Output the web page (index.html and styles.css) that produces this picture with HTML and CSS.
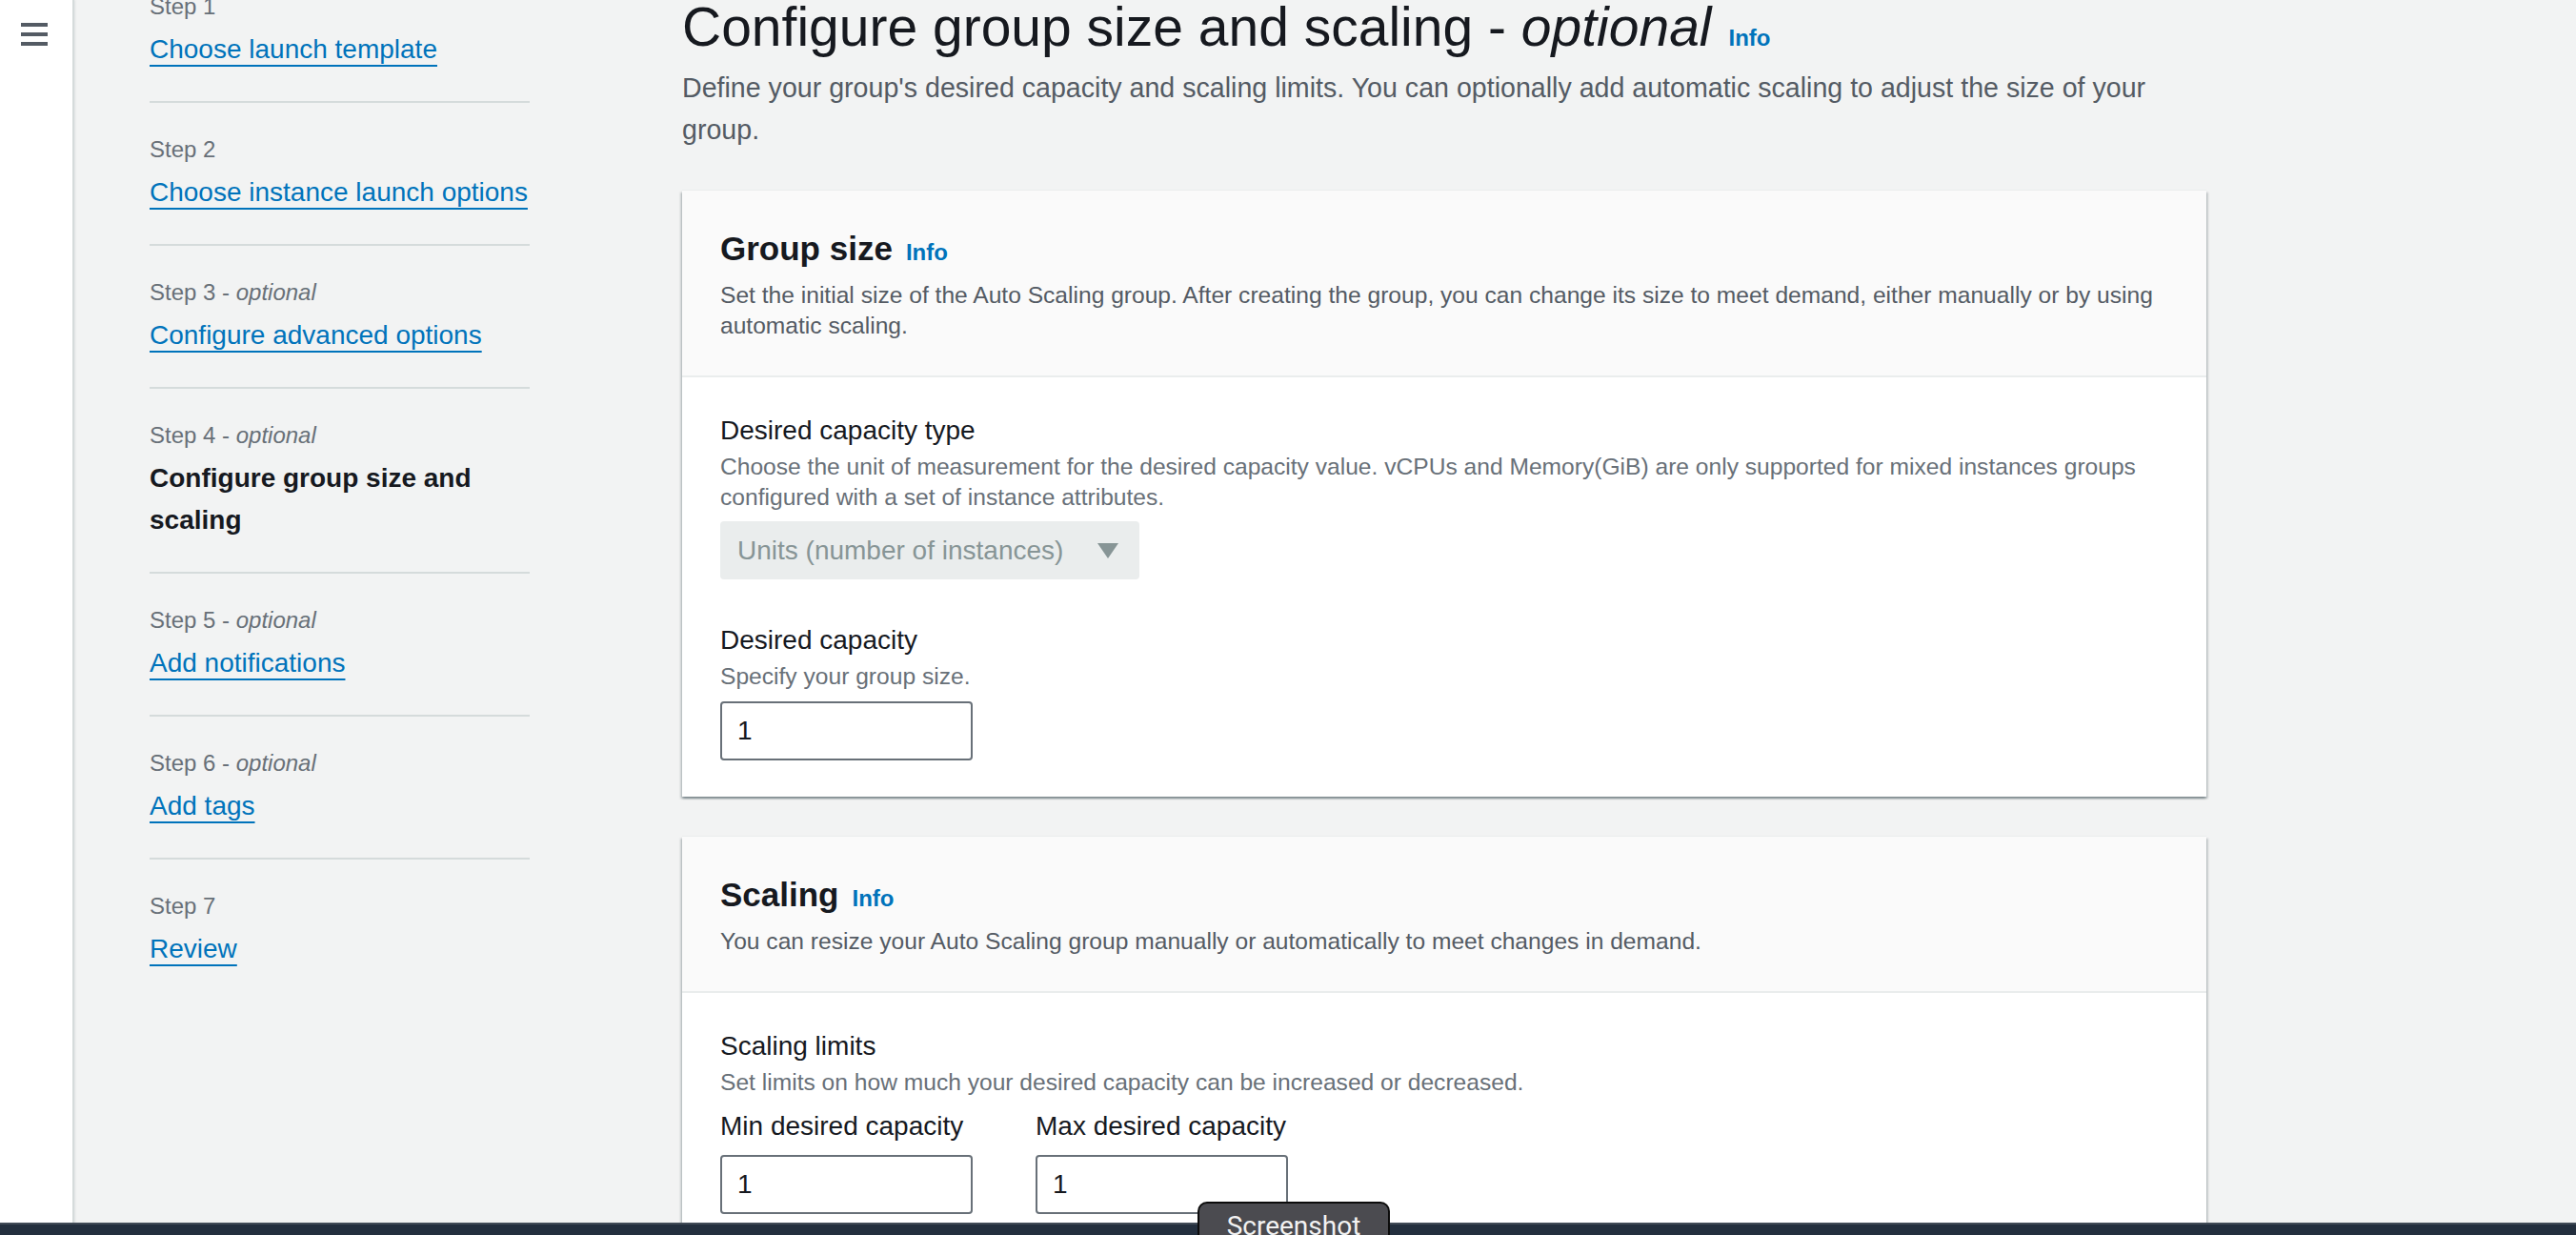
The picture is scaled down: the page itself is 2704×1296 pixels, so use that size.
FILE: index.html
```html
<!DOCTYPE html>
<html lang="en">
<head>
<meta charset="utf-8">
<title>Configure group size and scaling</title>
<link rel="stylesheet" href="styles.css">
</head>
<body>
<div class="app">
  <aside class="sidenav">
    <button class="menu" aria-label="Open navigation"><span></span><span></span><span></span></button>
  </aside>
  <div class="scroll">
    <nav class="steps">
      <ol>
        <li><div class="step-no">Step 1</div><a class="step-link" href="#">Choose launch template</a></li>
        <li><div class="step-no">Step 2</div><a class="step-link" href="#">Choose instance launch options</a></li>
        <li><div class="step-no">Step 3 - <i>optional</i></div><a class="step-link" href="#">Configure advanced options</a></li>
        <li><div class="step-no">Step 4 - <i>optional</i></div><span class="step-current">Configure group size and scaling</span></li>
        <li><div class="step-no">Step 5 - <i>optional</i></div><a class="step-link" href="#">Add notifications</a></li>
        <li><div class="step-no">Step 6 - <i>optional</i></div><a class="step-link" href="#">Add tags</a></li>
        <li><div class="step-no">Step 7</div><a class="step-link" href="#">Review</a></li>
      </ol>
    </nav>
    <main class="content">
      <h1 class="title">Configure group size and scaling - <i>optional</i><a class="info" href="#">Info</a></h1>
      <p class="lead">Define your group's desired capacity and scaling limits. You can optionally add automatic scaling to adjust the size of your group.</p>

      <section class="card">
        <header class="card-header">
          <h2>Group size<a class="info" href="#">Info</a></h2>
          <p>Set the initial size of the Auto Scaling group. After creating the group, you can change its size to meet demand, either manually or by using automatic scaling.</p>
        </header>
        <div class="card-body">
          <div class="field">
            <div class="label">Desired capacity type</div>
            <div class="hint">Choose the unit of measurement for the desired capacity value. vCPUs and Memory(GiB) are only supported for mixed instances groups configured with a set of instance attributes.</div>
            <div class="select"><span>Units (number of instances)</span><span class="caret"></span></div>
          </div>
          <div class="field">
            <div class="label">Desired capacity</div>
            <div class="hint">Specify your group size.</div>
            <div class="input">1</div>
          </div>
        </div>
      </section>

      <section class="card">
        <header class="card-header">
          <h2>Scaling<a class="info" href="#">Info</a></h2>
          <p>You can resize your Auto Scaling group manually or automatically to meet changes in demand.</p>
        </header>
        <div class="card-body">
          <div class="field">
            <div class="label">Scaling limits</div>
            <div class="hint">Set limits on how much your desired capacity can be increased or decreased.</div>
            <div class="limits">
              <div class="limit">
                <div class="label">Min desired capacity</div>
                <div class="input">1</div>
              </div>
              <div class="limit">
                <div class="label">Max desired capacity</div>
                <div class="input">1</div>
              </div>
            </div>
          </div>
        </div>
      </section>
    </main>
  </div>
</div>
<div class="footer-bar"></div>
<div class="tooltip">Screenshot</div>
</body>
</html>
```

FILE: styles.css
```css
* { box-sizing: border-box; }

html, body {
  margin: 0;
  padding: 0;
  height: 1296px;
  overflow: hidden;
  background: #f2f3f3;
  font-family: "Liberation Sans", Arial, sans-serif;
  color: #16191f;
}

.app {
  display: flex;
  height: 1296px;
  overflow: hidden;
}

.sidenav {
  flex: none;
  width: 78px;
  background: #ffffff;
  border-right: 2px solid #d5dbdb;
  box-shadow: 1px 0 2px rgba(0, 28, 36, 0.08);
}

.menu {
  display: flex;
  flex-direction: column;
  gap: 6px;
  margin: 24px 0 0 22px;
  padding: 0;
  border: 0;
  background: none;
}

.menu span {
  display: block;
  width: 28px;
  height: 4px;
  background: #545b64;
}

.scroll {
  display: flex;
  align-items: flex-start;
  gap: 160px;
  padding-left: 79px;
  margin-top: -42px;
}

/* Steps navigation */
.steps {
  flex: none;
  width: 399px;
}

.steps ol {
  list-style: none;
  margin: 0;
  padding: 0;
}

.steps li {
  padding: 33px 0 32px;
  border-bottom: 2px solid #d5dbdb;
}

.steps li:last-child {
  border-bottom: 0;
}

.step-no {
  font-size: 24px;
  line-height: 32px;
  color: #687078;
  margin-bottom: 7px;
}

.step-link {
  font-size: 28px;
  line-height: 44px;
  color: #0073bb;
  text-decoration: underline;
  text-decoration-thickness: 2px;
  text-underline-offset: 7px;
}

.step-current {
  display: block;
  font-size: 28px;
  line-height: 44px;
  font-weight: bold;
  color: #16191f;
}

/* Main content */
.content {
  flex: none;
  width: 1600px;
  padding-top: 38px;
}

.title {
  margin: 0;
  font-size: 57px;
  line-height: 64px;
  font-weight: normal;
  color: #16191f;
}

.info {
  font-size: 24px;
  font-weight: bold;
  color: #0073bb;
  text-decoration: none;
  margin-left: 16px;
}

.title .info {
  margin-left: 18px;
}

.lead {
  margin: -2px 0 0;
  max-width: 1580px;
  font-size: 28.6px;
  line-height: 44px;
  color: #545b64;
}

.card {
  margin-top: 42px;
  background: #ffffff;
  box-shadow: 0 2px 2px 0 rgba(0, 28, 36, 0.3),
              2px 2px 2px 0 rgba(0, 28, 36, 0.15),
              -2px 2px 2px 0 rgba(0, 28, 36, 0.15),
              0 -1px 0 0 #eaeded;
}

.card-header {
  background: #fafafa;
  padding: 39px 40px 36px;
  border-bottom: 2px solid #eaeded;
}

.card-header h2 {
  margin: 0;
  font-size: 35px;
  line-height: 44px;
  font-weight: bold;
  color: #16191f;
}

.card-header h2 .info {
  margin-left: 14px;
}

.card-header p {
  margin: 7px 0 0;
  font-size: 24.6px;
  line-height: 32px;
  color: #545b64;
}

.card-body {
  padding: 36px 40px 38px;
}

.field + .field {
  margin-top: 44px;
}

.label {
  font-size: 28px;
  line-height: 40px;
  color: #16191f;
}

.hint {
  margin-top: 2px;
  font-size: 24.6px;
  line-height: 32px;
  color: #687078;
}

.select {
  display: flex;
  align-items: center;
  justify-content: space-between;
  margin-top: 9px;
  width: 440px;
  height: 61px;
  padding: 0 22px 0 18px;
  background: #eaeded;
  border-radius: 4px;
  font-size: 28px;
  color: #879596;
}

.caret {
  width: 0;
  height: 0;
  border-left: 11px solid transparent;
  border-right: 11px solid transparent;
  border-top: 16px solid #879596;
}

.input {
  margin-top: 10px;
  width: 265px;
  height: 62px;
  padding: 0 16px;
  border: 2px solid #687078;
  border-radius: 4px;
  background: #ffffff;
  font-size: 28px;
  line-height: 58px;
  color: #16191f;
}

.limits {
  display: flex;
  gap: 66px;
  margin-top: 10px;
}

.limit {
  width: 265px;
}

/* Overlays */
.footer-bar {
  position: fixed;
  left: 0;
  right: 0;
  bottom: 0;
  height: 13px;
  background: #232f3e;
  border-top: 2px solid #414b57;
  z-index: 5;
}

.tooltip {
  position: fixed;
  left: 1257px;
  top: 1261px;
  width: 202px;
  height: 50px;
  padding-top: 8px;
  background: #4b4b50;
  border: 2px solid #0c0c0c;
  border-radius: 10px 10px 0 0;
  font-family: Roboto, "Liberation Sans", sans-serif;
  font-size: 28px;
  line-height: 32px;
  color: #f2f2f2;
  text-align: center;
  z-index: 6;
}
```
